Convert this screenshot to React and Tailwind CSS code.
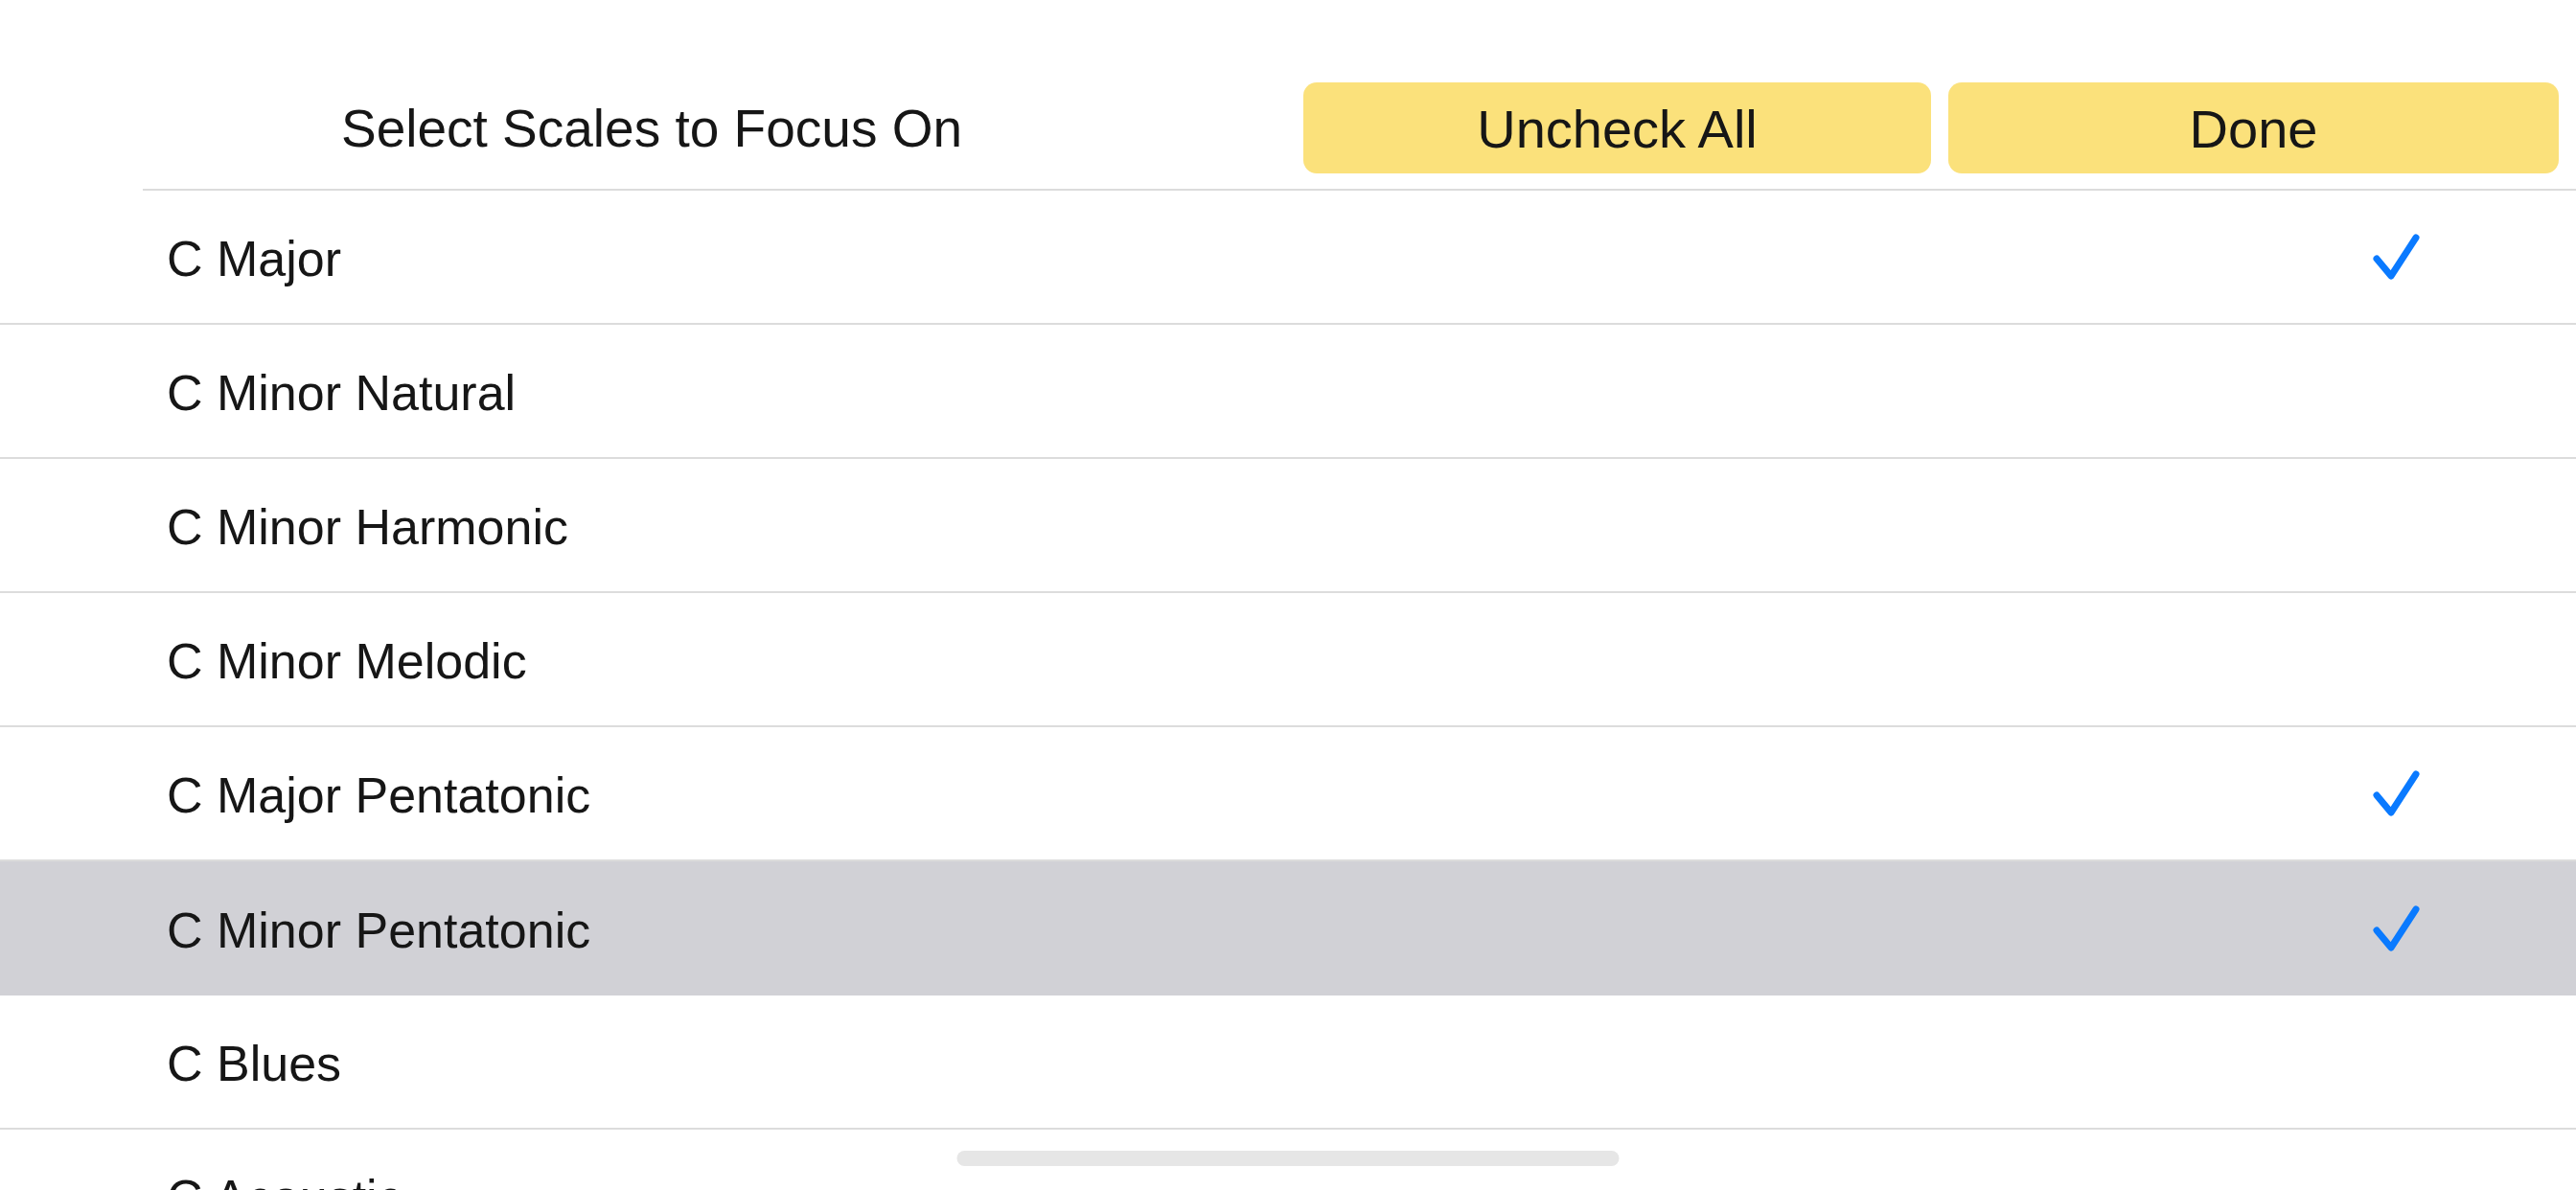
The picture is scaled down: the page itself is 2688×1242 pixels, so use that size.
import React from 'react'

const scales = [
  { name: 'C Major', checked: true },
  { name: 'C Minor Natural' },
  { name: 'C Minor Harmonic' },
  { name: 'C Minor Melodic' },
  { name: 'C Major Pentatonic', checked: true },
  { name: 'C Minor Pentatonic', checked: true, selected: true },
  { name: 'C Blues' },
  { name: 'C Acoustic' },
]

const Check = () => (
  <svg width="60" height="60" viewBox="0 0 60 60" fill="none">
    <path
      d="M10 32 L25 50 L51 10"
      stroke="#0a7aff"
      strokeWidth="7"
      strokeLinecap="round"
      strokeLinejoin="round"
    />
  </svg>
)

const ScaleRow = ({ name, checked, selected }) => {
  return (
    <div
      className={`flex h-[140px] shrink-0 items-center justify-between pl-[174px] pr-[158px] ${
        selected ? 'bg-[#d1d1d6]' : 'border-b-2 border-[#dcdcdc] bg-white'
      }`}
    >
      <span className="pt-[3px] text-[52px] leading-none text-[#161616]">{name}</span>
      {checked && <Check />}
    </div>
  )
}

export default function App() {
  return (
    <div
      className="relative flex h-[1242px] w-[2688px] flex-col overflow-hidden bg-white"
      style={{ fontFamily: '"Liberation Sans", Arial, sans-serif' }}
    >
      <div className="flex shrink-0 items-center pt-[86px] pb-[16px] pr-[18px]">
        <div className="flex w-[1360px] justify-center">
          <span className="pt-[2px] text-[55px] leading-none text-[#161616]">Select Scales to Focus On</span>
        </div>
        <button className="flex h-[95px] w-[655px] items-center justify-center rounded-[14px] bg-[#fbe17b] pt-[2px] text-[56px] leading-none text-[#161616]">
          Uncheck All
        </button>
        <button className="ml-[18px] flex h-[95px] flex-1 items-center justify-center rounded-[14px] bg-[#fbe17b] pt-[2px] text-[56px] leading-none text-[#161616]">
          Done
        </button>
      </div>
      <div className="ml-[149px] h-[2px] shrink-0 bg-[#dcdcdc]" />

      {scales.map((s) => (
        <ScaleRow key={s.name} {...s} />
      ))}

      {/* home indicator */}
      <div className="absolute bottom-[25px] left-1/2 h-[16px] w-[691px] -translate-x-1/2 rounded-full bg-[#e6e6e6]" />
    </div>
  )
}
